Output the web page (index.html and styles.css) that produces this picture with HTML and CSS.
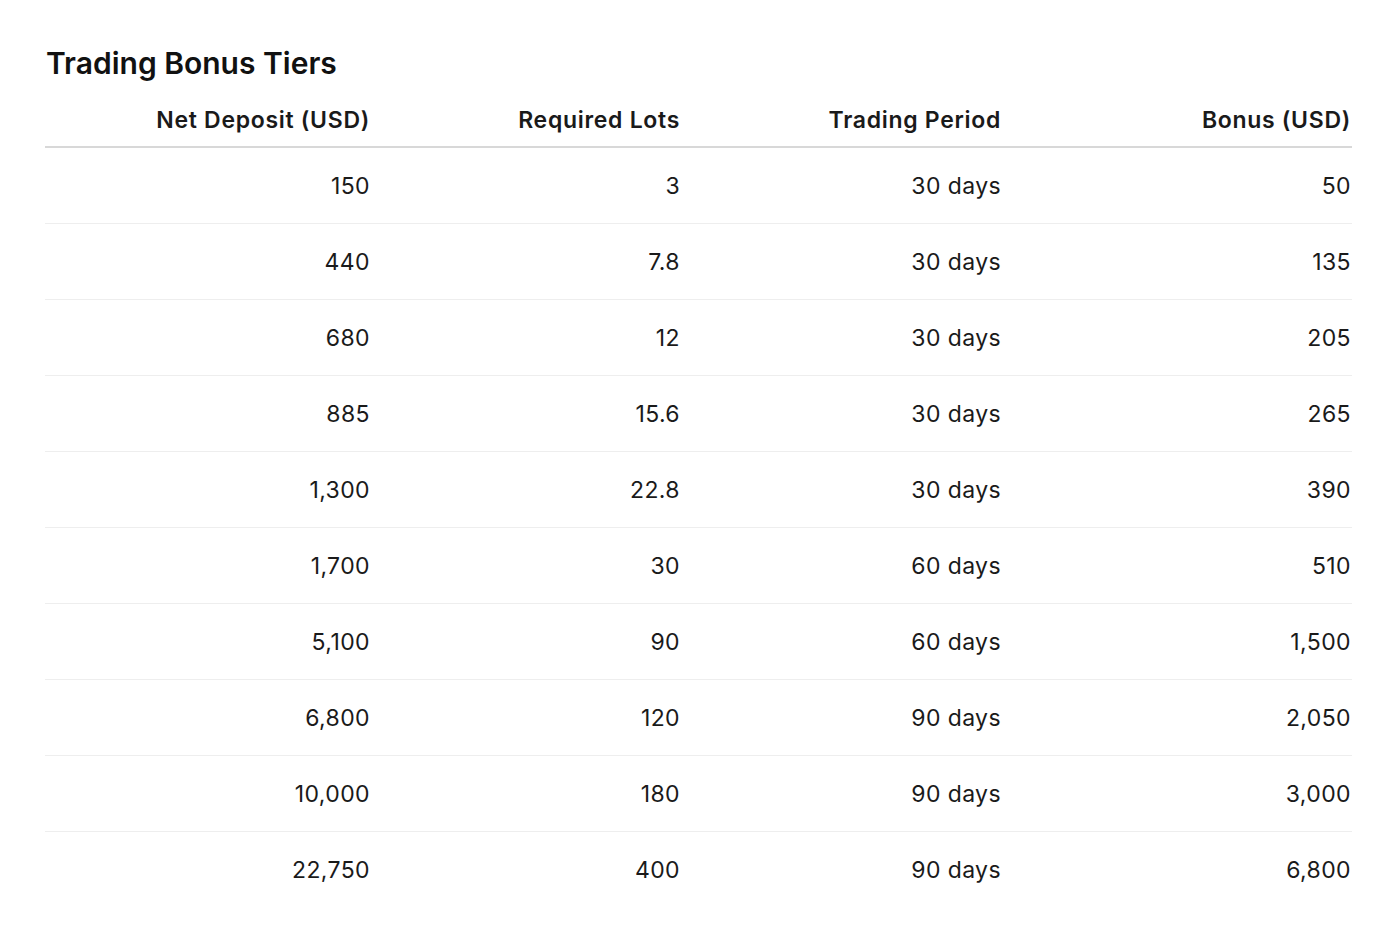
FILE: index.html
```html
<!DOCTYPE html>
<html lang="en">
<head>
<meta charset="utf-8">
<title>Trading Bonus Tiers</title>
<link rel="stylesheet" href="styles.css">
</head>
<body>
<section class="panel">
  <h2 class="title">Trading Bonus Tiers</h2>
  <table class="tiers">
    <colgroup>
      <col class="c1"><col class="c2"><col class="c3"><col class="c4">
    </colgroup>
    <thead>
      <tr><th>Net Deposit (USD)</th><th>Required Lots</th><th>Trading Period</th><th>Bonus (USD)</th></tr>
    </thead>
    <tbody>
      <tr><td>150</td><td>3</td><td>30 days</td><td>50</td></tr>
      <tr><td>440</td><td>7.8</td><td>30 days</td><td>135</td></tr>
      <tr><td>680</td><td>12</td><td>30 days</td><td>205</td></tr>
      <tr><td>885</td><td>15.6</td><td>30 days</td><td>265</td></tr>
      <tr><td>1,300</td><td>22.8</td><td>30 days</td><td>390</td></tr>
      <tr><td>1,700</td><td>30</td><td>60 days</td><td>510</td></tr>
      <tr><td>5,100</td><td>90</td><td>60 days</td><td>1,500</td></tr>
      <tr><td>6,800</td><td>120</td><td>90 days</td><td>2,050</td></tr>
      <tr><td>10,000</td><td>180</td><td>90 days</td><td>3,000</td></tr>
      <tr><td>22,750</td><td>400</td><td>90 days</td><td>6,800</td></tr>
    </tbody>
  </table>
</section>
</body>
</html>
```

FILE: styles.css
```css
html, body {
  margin: 0;
  padding: 0;
  background: #ffffff;
}
body {
  font-family: Inter, "Noto Sans", "Liberation Sans", sans-serif;
  color: #1a1a1a;
}
.panel {
  padding: 45px 47px 0 45px;
}
.title {
  margin: 0 0 14px 1px;
  font-size: 30px;
  line-height: 36px;
  font-weight: 600;
  color: #111111;
  letter-spacing: 0;
}
.tiers {
  width: 1307px;
  border-collapse: collapse;
  table-layout: fixed;
}
.c1 { width: 325px; }
.c2 { width: 310px; }
.c3 { width: 321px; }
.c4 { width: 351px; }
.tiers th {
  text-align: right;
  font-size: 23px;
  font-weight: 600;
  letter-spacing: 0.7px;
  color: #1a1a1a;
  height: 50px;
  padding: 0 0 1px 0;
  vertical-align: middle;
  border-bottom: 2px solid #d8d8d8;
}
.tiers th:last-child,
.tiers td:last-child {
  padding-right: 1px;
}
.tiers td {
  text-align: right;
  font-size: 23px;
  font-weight: 400;
  letter-spacing: 0.4px;
  color: #1a1a1a;
  height: 75px;
  padding: 0;
  vertical-align: middle;
  border-bottom: 1px solid #eeeeee;
}
.tiers tbody tr:last-child td {
  border-bottom: none;
}
```
